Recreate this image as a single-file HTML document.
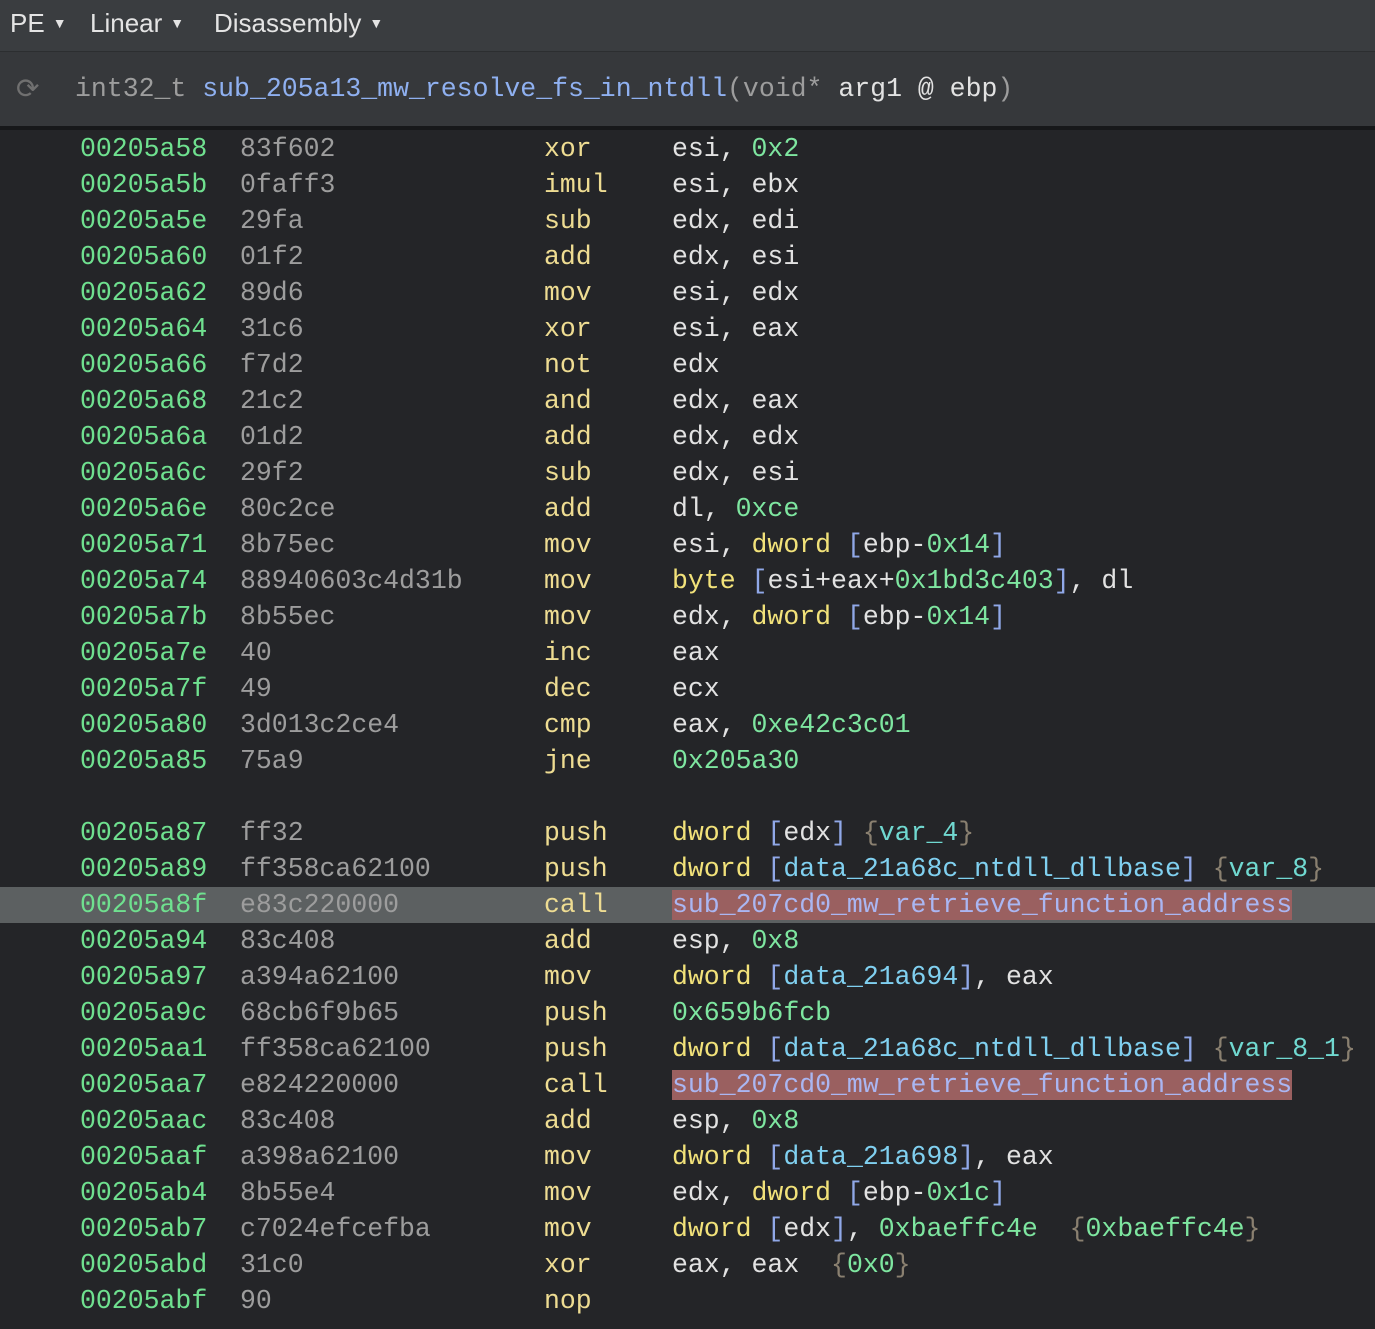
<!DOCTYPE html>
<html><head><meta charset="utf-8"><style>
body{margin:0;width:1375px;height:1329px;background:#242528;overflow:hidden;font-family:"Liberation Mono",monospace;}
.top{position:absolute;left:0;top:0;width:1375px;height:51px;background:#3a3d40;border-bottom:1px solid #2c2e30;font-family:"Liberation Sans",sans-serif;font-size:26px;color:#e4e4e4;}
.top span{position:absolute;top:8px;white-space:nowrap}
.top i{font-style:normal;font-size:14px;position:relative;top:-4px;margin-left:8px}
.hdr{position:absolute;left:0;top:52px;width:1375px;height:74px;background:#36383b;border-bottom:4px solid #17181a;font-size:26.5px;line-height:74px;white-space:pre;}
.rows{position:absolute;left:0;top:131px;width:1375px;font-size:26.5px;line-height:36px;}
.row{position:relative;height:36px;}
.row span{position:absolute;top:0;white-space:pre}
.a{left:80px;color:#6fe08f}.y{left:240px;color:#9d9d9d}.m{left:544px;color:#eedc92}.o{left:672px;color:#e2e2e2}
.n{color:#7ee6a0}.k{color:#f2e27a}.b{color:#90a8e8}.d{color:#80d0f0}.v{color:#70d8d0}.c{color:#8a8070}
.f{background:#9a6060;color:#aab6f2}
.hl{background:#5c6061}
.row .o span{position:static}
</style></head><body>
<div class="top"><span style="left:10px">PE<i>▼</i></span><span style="left:90px">Linear<i>▼</i></span><span style="left:214px">Disassembly<i>▼</i></span></div>
<div class="hdr"><span style="position:absolute;left:16px;color:#707070;font-family:'DejaVu Sans';font-size:28px">⟳</span><span style="position:absolute;left:75px;color:#9d9d9d">int32_t <span style="color:#8fb0f0">sub_205a13_mw_resolve_fs_in_ntdll</span><span style="color:#9d9d9d">(void* </span><span style="color:#e2e2e2">arg1 @ ebp</span><span style="color:#9d9d9d">)</span></span></div>
<div class="rows">
<div class="row"><span class="a">00205a58</span><span class="y">83f602</span><span class="m">xor</span><span class="o">esi, <span class="n">0x2</span></span></div>
<div class="row"><span class="a">00205a5b</span><span class="y">0faff3</span><span class="m">imul</span><span class="o">esi, ebx</span></div>
<div class="row"><span class="a">00205a5e</span><span class="y">29fa</span><span class="m">sub</span><span class="o">edx, edi</span></div>
<div class="row"><span class="a">00205a60</span><span class="y">01f2</span><span class="m">add</span><span class="o">edx, esi</span></div>
<div class="row"><span class="a">00205a62</span><span class="y">89d6</span><span class="m">mov</span><span class="o">esi, edx</span></div>
<div class="row"><span class="a">00205a64</span><span class="y">31c6</span><span class="m">xor</span><span class="o">esi, eax</span></div>
<div class="row"><span class="a">00205a66</span><span class="y">f7d2</span><span class="m">not</span><span class="o">edx</span></div>
<div class="row"><span class="a">00205a68</span><span class="y">21c2</span><span class="m">and</span><span class="o">edx, eax</span></div>
<div class="row"><span class="a">00205a6a</span><span class="y">01d2</span><span class="m">add</span><span class="o">edx, edx</span></div>
<div class="row"><span class="a">00205a6c</span><span class="y">29f2</span><span class="m">sub</span><span class="o">edx, esi</span></div>
<div class="row"><span class="a">00205a6e</span><span class="y">80c2ce</span><span class="m">add</span><span class="o">dl, <span class="n">0xce</span></span></div>
<div class="row"><span class="a">00205a71</span><span class="y">8b75ec</span><span class="m">mov</span><span class="o">esi, <span class="k">dword</span> <span class="b">[</span>ebp-<span class="n">0x14</span><span class="b">]</span></span></div>
<div class="row"><span class="a">00205a74</span><span class="y">88940603c4d31b</span><span class="m">mov</span><span class="o"><span class="k">byte</span> <span class="b">[</span>esi+eax+<span class="n">0x1bd3c403</span><span class="b">]</span>, dl</span></div>
<div class="row"><span class="a">00205a7b</span><span class="y">8b55ec</span><span class="m">mov</span><span class="o">edx, <span class="k">dword</span> <span class="b">[</span>ebp-<span class="n">0x14</span><span class="b">]</span></span></div>
<div class="row"><span class="a">00205a7e</span><span class="y">40</span><span class="m">inc</span><span class="o">eax</span></div>
<div class="row"><span class="a">00205a7f</span><span class="y">49</span><span class="m">dec</span><span class="o">ecx</span></div>
<div class="row"><span class="a">00205a80</span><span class="y">3d013c2ce4</span><span class="m">cmp</span><span class="o">eax, <span class="n">0xe42c3c01</span></span></div>
<div class="row"><span class="a">00205a85</span><span class="y">75a9</span><span class="m">jne</span><span class="o"><span class="n">0x205a30</span></span></div>
<div class="row"></div>
<div class="row"><span class="a">00205a87</span><span class="y">ff32</span><span class="m">push</span><span class="o"><span class="k">dword</span> <span class="b">[</span>edx<span class="b">]</span> <span class="c">{</span><span class="v">var_4</span><span class="c">}</span></span></div>
<div class="row"><span class="a">00205a89</span><span class="y">ff358ca62100</span><span class="m">push</span><span class="o"><span class="k">dword</span> <span class="b">[</span><span class="d">data_21a68c_ntdll_dllbase</span><span class="b">]</span> <span class="c">{</span><span class="v">var_8</span><span class="c">}</span></span></div>
<div class="row hl"><span class="a">00205a8f</span><span class="y">e83c220000</span><span class="m">call</span><span class="o"><span class="f">sub_207cd0_mw_retrieve_function_address</span></span></div>
<div class="row"><span class="a">00205a94</span><span class="y">83c408</span><span class="m">add</span><span class="o">esp, <span class="n">0x8</span></span></div>
<div class="row"><span class="a">00205a97</span><span class="y">a394a62100</span><span class="m">mov</span><span class="o"><span class="k">dword</span> <span class="b">[</span><span class="d">data_21a694</span><span class="b">]</span>, eax</span></div>
<div class="row"><span class="a">00205a9c</span><span class="y">68cb6f9b65</span><span class="m">push</span><span class="o"><span class="n">0x659b6fcb</span></span></div>
<div class="row"><span class="a">00205aa1</span><span class="y">ff358ca62100</span><span class="m">push</span><span class="o"><span class="k">dword</span> <span class="b">[</span><span class="d">data_21a68c_ntdll_dllbase</span><span class="b">]</span> <span class="c">{</span><span class="v">var_8_1</span><span class="c">}</span></span></div>
<div class="row"><span class="a">00205aa7</span><span class="y">e824220000</span><span class="m">call</span><span class="o"><span class="f">sub_207cd0_mw_retrieve_function_address</span></span></div>
<div class="row"><span class="a">00205aac</span><span class="y">83c408</span><span class="m">add</span><span class="o">esp, <span class="n">0x8</span></span></div>
<div class="row"><span class="a">00205aaf</span><span class="y">a398a62100</span><span class="m">mov</span><span class="o"><span class="k">dword</span> <span class="b">[</span><span class="d">data_21a698</span><span class="b">]</span>, eax</span></div>
<div class="row"><span class="a">00205ab4</span><span class="y">8b55e4</span><span class="m">mov</span><span class="o">edx, <span class="k">dword</span> <span class="b">[</span>ebp-<span class="n">0x1c</span><span class="b">]</span></span></div>
<div class="row"><span class="a">00205ab7</span><span class="y">c7024efcefba</span><span class="m">mov</span><span class="o"><span class="k">dword</span> <span class="b">[</span>edx<span class="b">]</span>, <span class="n">0xbaeffc4e</span>  <span class="c">{</span><span class="n">0xbaeffc4e</span><span class="c">}</span></span></div>
<div class="row"><span class="a">00205abd</span><span class="y">31c0</span><span class="m">xor</span><span class="o">eax, eax  <span class="c">{</span><span class="n">0x0</span><span class="c">}</span></span></div>
<div class="row"><span class="a">00205abf</span><span class="y">90</span><span class="m">nop</span></div>
</div>
</body></html>
